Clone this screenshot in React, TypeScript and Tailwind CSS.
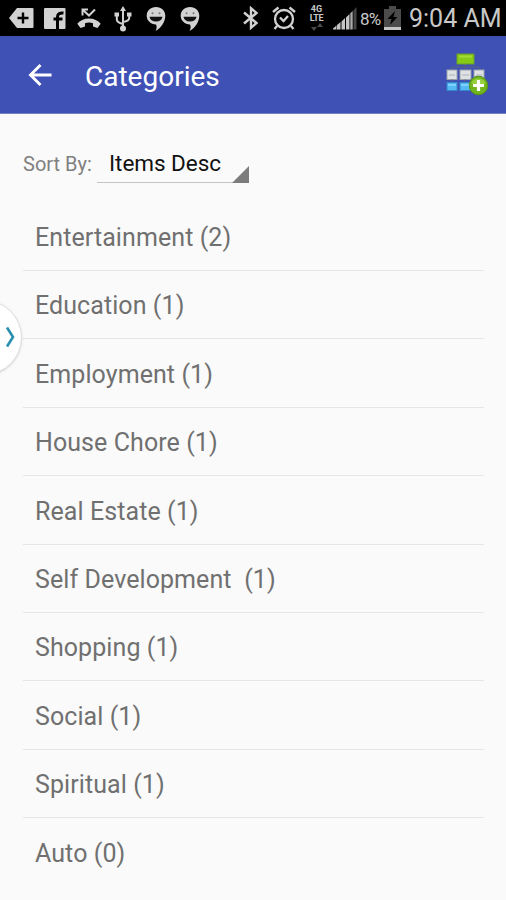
import { useState } from 'react'

const categories = [
  { name: 'Entertainment', items: 2 },
  { name: 'Education', items: 1 },
  { name: 'Employment', items: 1 },
  { name: 'House Chore', items: 1 },
  { name: 'Real Estate', items: 1 },
  { name: 'Self Development ', items: 1 },
  { name: 'Shopping', items: 1 },
  { name: 'Social', items: 1 },
  { name: 'Spiritual', items: 1 },
  { name: 'Auto', items: 0 },
]

function HangoutsIcon({ className }: { className: string }) {
  return (
    <svg viewBox="0 0 20 24" className={className}>
      <path d="M10 0C4.500 0 0.700 3.800 0.700 8.800c0 5 4 8.400 9.300 8.700 1 1.800.8 4.200-.4 6.500C15 21 19.300 15 19.300 8.800 19.300 3.800 15.500 0 10 0z" fill="#d2d2d2" />
      <path d="M3.500 9.800h13c-.4 3-2.800 4.700-6.500 4.700s-6.100-1.700-6.500-4.700z" fill="#111" />
      <circle cx="6.500" cy="6.300" r="1" fill="#777" />
      <circle cx="13.500" cy="6.300" r="1" fill="#777" />
    </svg>
  )
}

function StatusBar() {
  return (
    <div className="flex h-9 shrink-0 items-center bg-black pl-[9px] text-[#c8c8c8]">
      <svg viewBox="0 0 25 20" className="h-5 w-[25px]">
        <path d="M8 0h15.500q1 0 1 1v18q0 1-1 1H8L0 10z" fill="#d2d2d2" />
        <path d="M14 4.500v11M8.500 10h11" stroke="#000" strokeWidth="2.400" />
      </svg>
      <svg viewBox="0 0 22 21" className="ml-[10px] h-[21px] w-[22px]">
        <rect width="21.500" height="21" rx="1" fill="#d2d2d2" />
        <path d="M13.500 21V9q0-4.500 6-4M9.500 11h9" stroke="#000" strokeWidth="3" fill="none" />
      </svg>
      <svg viewBox="0 0 24 21" className="ml-[11px] h-[21px] w-6">
        <path d="M5.500 7.500V1.500h5.500M6 2l6 5.500L18 1.500" fill="none" stroke="#d2d2d2" strokeWidth="2" />
        <path d="M12 10.500c-5 0-9 2-11.700 5.200L3.500 20l4.500-1.600v-3.200c2.500-.9 5.500-.9 8 0v3.200l4.500 1.600 3.200-4.300C21 12.500 17 10.500 12 10.500z" fill="#d2d2d2" />
      </svg>
      <svg viewBox="0 0 18 26" className="ml-[13px] mt-[2px] h-[26px] w-[18px]" fill="none" stroke="#d2d2d2" strokeWidth="2">
        <path d="M9 3v19M2.800 9v4.500q0 3 6.200 4.500M15.200 9v3q0 3-6.200 4" />
        <path d="M9 0l3 5H6zM.5 6.500h4.500v4H.5zM13 6.500h4.500v4H13z" fill="#d2d2d2" stroke="none" />
        <circle cx="9" cy="22.500" r="3" fill="#d2d2d2" stroke="none" />
      </svg>
      <HangoutsIcon className="ml-[14px] mt-px h-6 w-5" />
      <HangoutsIcon className="ml-[14px] mt-px h-6 w-5" />
      <svg viewBox="0 0 16 24" className="ml-[43px] h-6 w-4" fill="none" stroke="#d2d2d2" strokeWidth="2.400">
        <path d="M1 6.500l12.500 10.500L8 21.800V2.200L13.500 7 1 17.500" />
      </svg>
      <svg viewBox="0 0 24 24" className="ml-[13px] h-6 w-6" fill="none" stroke="#d2d2d2" strokeWidth="2.300">
        <circle cx="12" cy="13" r="9" />
        <path d="M8 11.500l3.500 3.500L16 10M1 6l5.500-4.500M23 6l-5.500-4.500M5 20l-2.500 3M19 20l2.500 3" />
      </svg>
      <div className="ml-[12px] flex w-[17px] flex-col items-center font-bold">
        <span className="text-[9px] leading-[9px]">4G</span>
        <span className="text-[9px] leading-[9px] tracking-[-0.3px]">LTE</span>
        <svg viewBox="0 0 12 8" className="h-2 w-3">
          <path d="M3 0v5M9 8V3M0 4h6L3 8zM6 4h6L9 0z" fill="#4b4b4b" />
        </svg>
      </div>
      <svg viewBox="0 0 24 24" className="ml-[8px] h-6 w-6">
        <path d="M0 23.500h3.500v-4L0 22.500zM4 23.500h3.500v-7.500L4 19zM8.500 23.500h3.500V12l-3.500 3.500zM13 23.500h3.500V8L13 11.500z" fill="#c4c4c4" />
        <path d="M17.300 23.500h2.400V5l-2.400 2.300z" fill="#aaa" />
        <path d="M20.500 23.500h3V1l-3 3.500z" fill="#444" />
      </svg>
      <span className="ml-[3px] mt-[3px] w-[23px] whitespace-nowrap text-[17px] tracking-[-0.8px]">8%</span>
      <svg viewBox="0 0 17 24" className="ml-px h-6 w-[17px]">
        <path d="M5 0h7v3h5v21H0V3h5z" fill="#4b4b4b" />
        <path d="M11 5L3.500 13h4L6 19l7.500-8h-4z" fill="#000" />
        <path d="M0 21h17v3H0z" fill="#c4c4c4" />
      </svg>
      <span className="ml-[8px] mt-[2px] whitespace-nowrap text-[25px]">9:04 AM</span>
    </div>
  )
}

function AddCategoryIcon() {
  return (
    <svg viewBox="0 0 44 44" className="h-11 w-11">
      <path d="M21 11v6M8 17v-3h27v3" stroke="#5a6280" fill="none" />
      <rect x="13" y="1" width="17" height="10" fill="#86cc16" stroke="#6a9d2b" />
      <path d="M15 3.500h13" stroke="#a4dc38" strokeWidth="2" />
      <g fill="#dfe2e4" stroke="#9ba2aa">
        <rect x="3" y="17" width="10" height="9.500" />
        <rect x="16" y="17" width="11" height="9.500" />
        <rect x="30" y="17" width="10" height="9.500" />
      </g>
      <path d="M5 22h6M18 22h7M32 22h6" stroke="#c6c9cd" strokeWidth="2" />
      <path d="M8 26.500v3M21 26.500v3" stroke="#5a6280" />
      <g fill="#55b9f5" stroke="#3488c8">
        <rect x="3" y="29.500" width="10" height="8" />
        <rect x="16" y="29.500" width="11" height="8" />
      </g>
      <path d="M4 32h8M17 32h9" stroke="#8cd8ff" strokeWidth="1.500" />
      <circle cx="34.500" cy="32.500" r="9.300" fill="#70b51b" stroke="#548c22" />
      <path d="M27.300 30.500a7.500 7 0 0 1 14.400 0q-7.200 4-14.400 0z" fill="#94cf3c" />
      <path d="M34.500 27v11M29 32.500h11" stroke="#fff" strokeWidth="3.200" />
    </svg>
  )
}

export default function App() {
  const [sortBy] = useState('Items Desc')

  return (
    <div className="relative flex h-[900px] w-[506px] flex-col overflow-hidden bg-[#fafafa] font-['Roboto',sans-serif]">
      <StatusBar />

      <header className="flex h-[78px] shrink-0 items-center border-b border-[#7580c4] bg-[#3f51b5] pl-[28px] pr-[18px] text-white">
        <button aria-label="Back" className="mt-[1px]">
          <svg viewBox="0 0 24 24" className="h-6 w-6" fill="none" stroke="#fff" strokeWidth="2.900">
            <path d="M23.500 12H3M12.500 2L2.500 12l10 10" />
          </svg>
        </button>
        <h1 className="ml-[33px] mt-[4px] text-[28px] leading-8">Categories</h1>
        <button aria-label="Add category" className="ml-auto">
          <AddCategoryIcon />
        </button>
      </header>

      <main className="pl-[23px] pr-[22px] pt-[31px]">
        <div className="flex h-[38px]">
          <span className="w-[74px] whitespace-nowrap pt-[6px] text-[20px] leading-[26px] text-[#808080]">Sort By:</span>
          <button className="relative flex w-[152px] border-b border-[#c4c4c4] pl-3 pt-[5px] text-[22.5px] leading-[26px] tracking-[-0.05px] text-[#111]">
            {sortBy}
            <svg viewBox="0 0 17 17" className="absolute -bottom-px right-0 h-[17px] w-[17px]">
              <path d="M17 0v17H0z" fill="#7c7c7c" />
            </svg>
          </button>
        </div>

        <ul className="mt-[19.4px]">
          {categories.map((c) => (
            <li
              key={c.name}
              className="flex h-[68.45px] items-center whitespace-pre border-b border-[#e6e6e6] pl-3 pt-[3px] text-[25px] tracking-[0.08px] text-[#707070] last:border-0"
            >
              {c.name} ({c.items})
            </li>
          ))}
        </ul>
      </main>

      <button
        aria-label="Open drawer"
        className="absolute -left-[53px] top-[300px] flex h-[75px] w-[75px] items-center justify-end rounded-full border border-[#dedede] bg-white pr-[6px] shadow-sm"
      >
        <svg viewBox="0 0 10 22" className="mb-px h-[22px] w-[10px]" fill="none" stroke="#2b8fb0" strokeWidth="2.600">
          <path d="M2 1.500L8 11l-6 9.500" />
        </svg>
      </button>
    </div>
  )
}
